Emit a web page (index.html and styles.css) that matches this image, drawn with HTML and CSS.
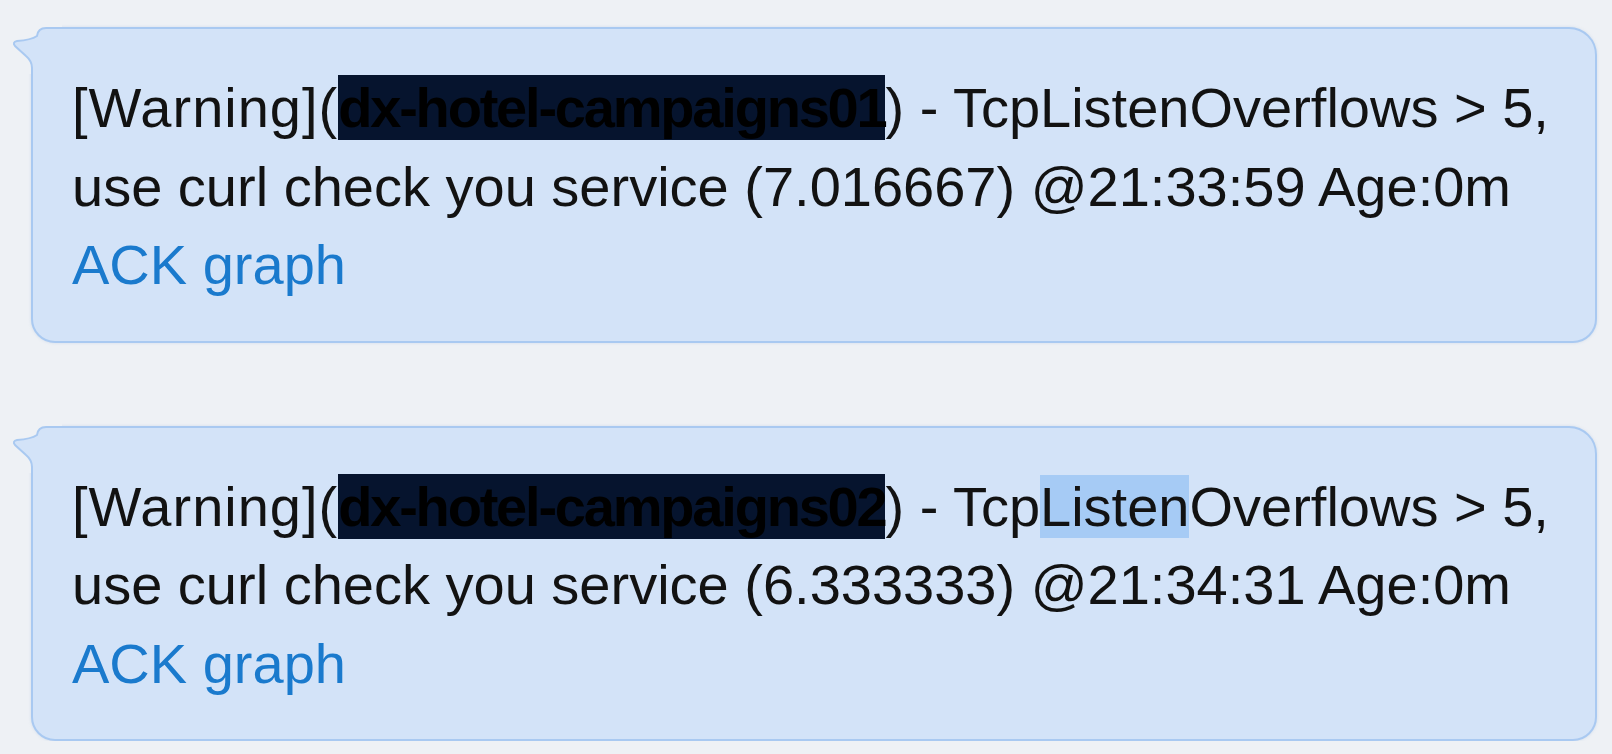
FILE: index.html
```html
<!DOCTYPE html>
<html lang="en">
<head>
<meta charset="utf-8">
<title>Alerts</title>
<link rel="stylesheet" href="styles.css">
</head>
<body>
<div class="feed">
  <div class="bubble">
    <svg class="tail" width="50" height="50" viewBox="0 0 50 50" aria-hidden="true">
      <rect class="tail-erase" x="0" y="0" width="50" height="50"/>
      <path class="tail-fill" d="M50 4 H34 Q26 4 25 12 Q19 16 5 17 Q0 18 3 22 L14 32 Q20 37 20 44 V50 H50 Z"/>
      <path class="tail-line" d="M50 4 H34 Q26 4 25 12 Q19 16 5 17 Q0 18 3 22 L14 32 Q20 37 20 44 V50"/>
    </svg>
    <p class="msg"><span class="level">[Warning](</span><span class="redact">dx-hotel-campaigns01</span>) - TcpListenOverflows &gt; 5,<br>use curl check you service (7.016667) @21:33:59 Age:0m<br><a class="link" href="#">ACK</a> <a class="link" href="#">graph</a></p>
  </div>
  <div class="bubble">
    <svg class="tail" width="50" height="50" viewBox="0 0 50 50" aria-hidden="true">
      <rect class="tail-erase" x="0" y="0" width="50" height="50"/>
      <path class="tail-fill" d="M50 4 H34 Q26 4 25 12 Q19 16 5 17 Q0 18 3 22 L14 32 Q20 37 20 44 V50 H50 Z"/>
      <path class="tail-line" d="M50 4 H34 Q26 4 25 12 Q19 16 5 17 Q0 18 3 22 L14 32 Q20 37 20 44 V50"/>
    </svg>
    <p class="msg"><span class="level">[Warning](</span><span class="redact">dx-hotel-campaigns02</span>) - Tcp<span class="select">Listen</span>Overflows &gt; 5,<br>use curl check you service (6.333333) @21:34:31 Age:0m<br><a class="link" href="#">ACK</a> <a class="link" href="#">graph</a></p>
  </div>
</div>
</body>
</html>
```

FILE: styles.css
```css
html, body {
  margin: 0;
  padding: 0;
}

body {
  background: #eef1f5;
  font-family: "Liberation Sans", Arial, Helvetica, sans-serif;
  color: #121212;
}

.feed {
  display: flex;
  flex-direction: column;
  gap: 83px;
  padding: 27px 15px 0 31px;
}

.bubble {
  position: relative;
  background: #d3e3f8;
  border: 2px solid #a9c9f1;
  border-radius: 0 28px 24px 24px;
  padding: 40px 30px 36px 39px;
  box-shadow: 0 0 3px rgba(150, 180, 220, 0.35);
}

.msg {
  margin: 0;
  font-size: 56px;
  line-height: 78.5px;
  white-space: nowrap;
}

.level {
  letter-spacing: 1px;
}

.redact {
  background: #06142e;
  color: #000;
  font-weight: bold;
  letter-spacing: -2.2px;
  padding: 1px 0;
}

.select {
  background: #a6cbf5;
}

.link {
  color: #1a7acd;
  text-decoration: none;
}

.tail {
  position: absolute;
  left: -21px;
  top: -5px;
  overflow: visible;
}

.tail-erase {
  fill: #eef1f5;
}

.tail-fill {
  fill: #d3e3f8;
}

.tail-line {
  fill: none;
  stroke: #a9c9f1;
  stroke-width: 2;
  stroke-linejoin: round;
}
```
